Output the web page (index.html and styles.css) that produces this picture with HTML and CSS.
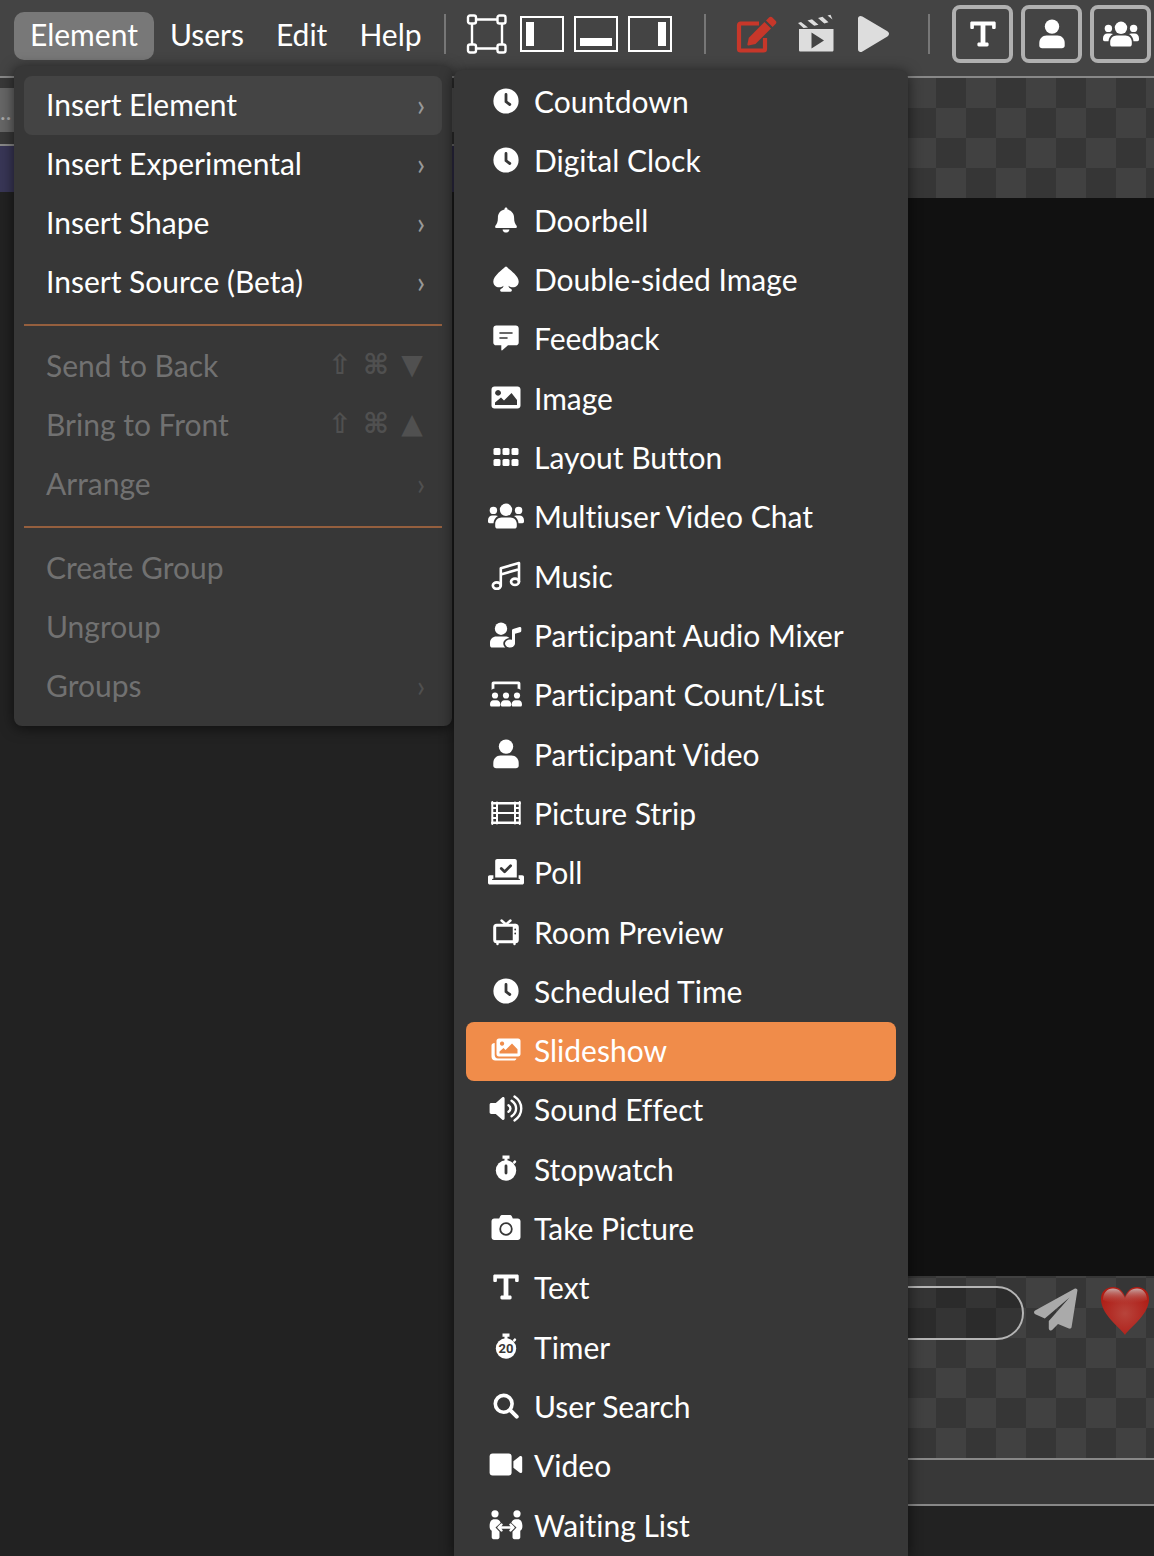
FILE: index.html
```html
<!DOCTYPE html>
<html lang="en">
<head>
    <meta charset="UTF-8">
    <meta name="viewport" content="width=device-width, initial-scale=1.0">
    <title>Room Editor</title>
    <link rel="stylesheet" href="styles.css">
</head>
<body>
    <!-- shared icons -->
    <svg class="sprite" aria-hidden="true">
        <symbol id="clock" viewBox="0 0 36 30">
            <circle cx="18" cy="15" r="12.6"/>
            <path class="cut" d="M18 8.5v7.2l3.8 2.8" stroke-width="2.8"/>
        </symbol>
        <symbol id="user" viewBox="0 0 36 30">
            <circle cx="18" cy="7.6" r="7.2"/>
            <path d="M12.5 16.6h11c4.2 0 7.2 3.4 7.2 7.4v2.4c0 1.7-1.2 2.8-2.8 2.8H8.1c-1.6 0-2.8-1.1-2.8-2.8V24c0-4 3-7.4 7.2-7.4z"/>
        </symbol>
        <symbol id="users" viewBox="0 0 36 30">
            <circle cx="18" cy="8.8" r="6.2"/>
            <circle cx="5.4" cy="9.4" r="3.7"/>
            <circle cx="30.6" cy="9.4" r="3.7"/>
            <path d="M13.6 16.4h8.8c3.6 0 6.4 2.8 6.4 6.4v2.4c0 1.4-1 2.3-2.3 2.3h-17c-1.3 0-2.3-.9-2.3-2.3v-2.4c0-3.6 2.8-6.4 6.4-6.4z"/>
            <path d="M0 19.2c0-2.6 2-4.6 4.4-4.6h3.2c.9 0 1.7.2 2.4.5-2.6 1.5-4.3 4-4.5 7.1H1.6c-.9 0-1.6-.7-1.6-1.6z"/>
            <path d="M36 19.2c0-2.6-2-4.6-4.4-4.6h-3.2c-.9 0-1.7.2-2.4.5 2.6 1.5 4.3 4 4.5 7.1h3.9c.9 0 1.6-.7 1.6-1.6z"/>
        </symbol>
        <symbol id="text" viewBox="0 0 36 30">
            <path d="M6.6 2.4h22.8c.7 0 1.3.6 1.3 1.3v5c0 .7-.6 1.3-1.3 1.3h-1c-.7 0-1.3-.6-1.3-1.3V6.5h-6.7v17h1.8c.8 0 1.4.6 1.4 1.4v1.2c0 .8-.6 1.4-1.4 1.4h-8.4c-.8 0-1.4-.6-1.4-1.4v-1.2c0-.8.6-1.4 1.4-1.4h1.8v-17H8.9v2.2c0 .7-.6 1.3-1.3 1.3h-1c-.7 0-1.3-.6-1.3-1.3v-5c0-.7.6-1.3 1.3-1.3z"/>
        </symbol>
        <symbol id="watch" viewBox="0 0 36 30">
            <path d="M14.5 1.5h7v3.3h-2v3h-3v-3h-2z"/>
            <path d="M24.6 8.2l1.5-1.5c.6-.6 1.4-.3 1.8.2.5.5.5 1.1 0 1.6l-1.5 1.5z"/>
            <circle cx="18" cy="16.5" r="10.2"/>
        </symbol>
    </svg>

    <header class="toolbar">
        <nav class="menubar">
            <button class="menu-btn active" aria-expanded="true">Element</button>
            <button class="menu-btn">Users</button>
            <button class="menu-btn">Edit</button>
            <button class="menu-btn">Help</button>
        </nav>
        <div class="tools panels">
            <button class="tool" aria-label="Transform">
                <svg width="44" height="40" viewBox="0 0 44 40" fill="none" stroke="#fff" stroke-width="2.4">
                    <path d="M10 5.5h22M10 34.500h22M6 9v22M36 9v22"/>
                    <rect x="2" y="1.500" width="8" height="8" rx="2"/><rect x="31.500" y="1.500" width="8" height="8" rx="2"/>
                    <rect x="2" y="30.500" width="8" height="8" rx="2"/><rect x="31.500" y="30.500" width="8" height="8" rx="2"/>
                </svg>
            </button>
            <button class="tool" aria-label="Left panel">
                <svg width="44" height="36" viewBox="0 0 44 36"><rect class="frame" x="1" y="1" width="42" height="34"/><path fill="#fff" d="M6 6h8v24H6z"/></svg>
            </button>
            <button class="tool" aria-label="Bottom panel">
                <svg width="44" height="36" viewBox="0 0 44 36"><rect class="frame" x="1" y="1" width="42" height="34"/><path fill="#fff" d="M6 22h32v8H6z"/></svg>
            </button>
            <button class="tool" aria-label="Right panel">
                <svg width="44" height="36" viewBox="0 0 44 36"><rect class="frame" x="1" y="1" width="42" height="34"/><path fill="#fff" d="M30 6h8v24h-8z"/></svg>
            </button>
        </div>
        <div class="tools modes">
            <button class="tool" aria-label="Edit mode">
                <svg width="42" height="40" viewBox="1 0 42 40" fill="#c7372a">
                    <path d="M24 9.500H5.500a1.500 1.500 0 0 0-1.500 1.500v24a1.500 1.500 0 0 0 1.500 1.500h23a1.500 1.500 0 0 0 1.500-1.500V24" fill="none" stroke="#c7372a" stroke-width="4.200"/>
                    <path d="M29.500 8l6.500 6.500L20.500 30l-7 1.400c-.7.1-1.200-.4-1.100-1.100l1.400-6.500z"/>
                    <path d="M31 6.500l3-3c1-1 2.400-1 3.400 0l3.200 3.200c1 1 1 2.400 0 3.400l-3 2.900z"/>
                </svg>
            </button>
            <button class="tool" aria-label="Scenes">
                <svg width="40" height="40" viewBox="0 0 40 40" fill="#ddd">
                    <path fill-rule="evenodd" d="M1 15h34.500v21c0 1-.6 1.600-1.500 1.600H2.500C1.600 37.600 1 37 1 36zM13.500 18.500v16L26 26.500z"/>
                    <path d="M0 9l3-1 7 5.500-4.500.5zM9.500 6.500l4.500-1.300 6.500 5.600-4.300 1zM20 4l4.500-1.300 6 5.500-4.200 1.200zM29.500 1.500l3-.8 2 4.800z"/>
                </svg>
            </button>
            <button class="tool" aria-label="Play">
                <svg width="32" height="38" viewBox="0 0 32 38" fill="#ddd"><path d="M0 3.500C0 1 2.400.3 4.400 1.500l25 14.800c2.200 1.300 2.200 3.900 0 5.200l-25 15C2.400 37.700 0 36.800 0 34.300z"/></svg>
            </button>
        </div>
        <div class="tools inserts">
            <button class="insert-btn" aria-label="Add text"><svg class="icon"><use href="#text"/></svg></button>
            <button class="insert-btn" aria-label="Add participant"><svg class="icon"><use href="#user"/></svg></button>
            <button class="insert-btn" aria-label="Add group"><svg class="icon"><use href="#users"/></svg></button>
        </div>
    </header>

    <main class="workspace">
        <aside class="sidebar">
            <div class="sidebar-top"><button class="picker">..</button></div>
            <div class="selected-row"></div>
        </aside>
        <section class="stage">
            <div class="screen"></div>
            <form class="chat">
                <input class="chat-input" type="text" aria-label="Message">
                <button class="tool" type="button" aria-label="Send">
                    <svg width="44" height="46" viewBox="0 -2 44 46" fill="#aaa">
                        <path d="M40.500.7c1.500-.9 3.200.2 2.900 1.900l-5.800 36.500c-.2 1.300-1.500 2-2.700 1.500L24 36l-5.600 5.800c-1.300 1.300-3.600.5-3.600-1.400V33L35.500 9.500 10.800 30.400l-9.500-4.100c-1.600-.7-1.700-2.900-.2-3.800z"/>
                    </svg>
                </button>
                <button class="tool" type="button" aria-label="Heart">
                    <svg width="50" height="50" viewBox="0 0 50 50">
                        <defs>
                            <radialGradient id="heart" cx="50%" cy="55%" r="60%"><stop offset="0" stop-color="#b8443b"/><stop offset=".55" stop-color="#b22c25"/><stop offset="1" stop-color="#b01b12"/></radialGradient>
                            <linearGradient id="shine" x1="0" y1="0" x2="0" y2="1"><stop offset="0" stop-color="#ccc" stop-opacity=".8"/><stop offset="1" stop-color="#b8443b" stop-opacity="0"/></linearGradient>
                        </defs>
                        <path fill="url(#heart)" d="M25 49C22 43 2 30 1 14 .5 6 6 1 13 1c6 0 10 4 12 10C27 5 31 1 37 1c7 0 12.500 5 12 13-1 16-21 29-24 35z"/>
                        <path fill="url(#shine)" d="M3 14C3 7 7 2.500 13 2.500c6 0 9.500 4 12 10 2.500-6 6-10 12-10 6 0 10 4.500 10 11.500-12 5-32 5-44 0z"/>
                    </svg>
                </button>
            </form>
            <div class="status-bar"></div>
            <div class="drawer"></div>
        </section>
    </main>

    <ul class="dropdown">
        <li><button class="item open">Insert Element <span class="arrow">›</span></button></li>
        <li><button class="item">Insert Experimental <span class="arrow">›</span></button></li>
        <li><button class="item">Insert Shape <span class="arrow">›</span></button></li>
        <li><button class="item">Insert Source (Beta) <span class="arrow">›</span></button></li>
        <li class="divider"></li>
        <li><button class="item" disabled>Send to Back <span class="keys"><kbd>⇧</kbd><kbd>⌘</kbd><kbd>▼</kbd></span></button></li>
        <li><button class="item" disabled>Bring to Front <span class="keys"><kbd>⇧</kbd><kbd>⌘</kbd><kbd>▲</kbd></span></button></li>
        <li><button class="item" disabled>Arrange <span class="arrow">›</span></button></li>
        <li class="divider"></li>
        <li><button class="item" disabled>Create Group</button></li>
        <li><button class="item" disabled>Ungroup</button></li>
        <li><button class="item" disabled>Groups <span class="arrow">›</span></button></li>
    </ul>

    <ul class="submenu">
        <li><button class="element"><svg class="icon"><use href="#clock"/></svg>Countdown</button></li>
        <li><button class="element"><svg class="icon"><use href="#clock"/></svg>Digital Clock</button></li>
        <li><button class="element"><svg class="icon" viewBox="0 0 36 30">
            <path d="M18 2.500c.8 0 1.500.6 1.500 1.500v.6c4 .8 6.600 4 6.600 8.200 0 4 .9 5.900 2.500 8 .6.900.1 2.100-1 2.100H8.400c-1.100 0-1.600-1.200-1-2.100 1.600-2.100 2.500-4 2.500-8 0-4.200 2.600-7.400 6.600-8.200V4c0-.9.700-1.500 1.500-1.500zM14.600 24.400h6.800c-.2 4.200-6.600 4.200-6.800 0z"/>
        </svg>Doorbell</button></li>
        <li><button class="element"><svg class="icon" viewBox="0 0 36 30">
            <path d="M17 3c.6-.7 1.400-.7 2 0 1.800 2.200 11.700 8.600 11.700 14.500 0 5.600-6.200 7.400-10.200 4.300.2 1.700.9 2.400 2.600 3.200 1.200.6 1 2.700-.6 2.700h-9c-1.600 0-1.800-2.100-.6-2.700 1.700-.8 2.400-1.500 2.600-3.200-4 3.100-10.200 1.300-10.200-4.300C5.300 11.600 15.200 5.200 17 3z"/>
        </svg>Double-sided Image</button></li>
        <li><button class="element"><svg class="icon" viewBox="0 0 36 30">
            <path d="M8.200 2.500h19.600c1.700 0 2.900 1.200 2.900 2.900v14c0 1.700-1.200 2.900-2.900 2.900H20l-5.700 4.900c-.5.400-1 .1-1-.5v-4.400H8.200c-1.700 0-2.900-1.200-2.900-2.900v-14c0-1.700 1.200-2.900 2.900-2.900z"/>
            <path class="cut" d="M12 10h12M12 15h7" stroke-width="1.600"/>
        </svg>Feedback</button></li>
        <li><button class="element"><svg class="icon" viewBox="0 0 36 30">
            <path fill-rule="evenodd" d="M6.500 3.500h23c1.700 0 3 1.300 3 3v16c0 1.700-1.300 3-3 3h-23c-1.700 0-3-1.300-3-3v-16c0-1.700 1.300-3 3-3zM7 22h22v-5l-5.500-7-7.500 7.500-3-3-6 5zM10 7a2.900 2.900 0 1 0 .1 0z"/>
        </svg>Image</button></li>
        <li><button class="element"><svg class="icon" viewBox="0 0 36 30">
            <rect x="5.500" y="6" width="7" height="7" rx="1.500"/><rect x="14.500" y="6" width="7" height="7" rx="1.500"/><rect x="23.500" y="6" width="7" height="7" rx="1.500"/>
            <rect x="5.500" y="17" width="7" height="7" rx="1.500"/><rect x="14.500" y="17" width="7" height="7" rx="1.500"/><rect x="23.500" y="17" width="7" height="7" rx="1.500"/>
        </svg>Layout Button</button></li>
        <li><button class="element"><svg class="icon"><use href="#users"/></svg>Multiuser Video Chat</button></li>
        <li><button class="element"><svg class="icon line" viewBox="0 0 36 30" stroke-width="2.600">
            <ellipse cx="8.800" cy="24.600" rx="4" ry="3.200"/><ellipse cx="27" cy="20.800" rx="4" ry="3.200"/>
            <path d="M12.800 24.600V7.200L31 2v18.800M12.800 13.500L31 8.300"/>
        </svg>Music</button></li>
        <li><button class="element"><svg class="icon" viewBox="0 0 36 30">
            <circle cx="13" cy="8.700" r="6.200"/>
            <path d="M8.400 16.500h8.800c1.600 0 3 .5 4.100 1.400-3.600.7-6 2.800-6 5.500 0 1.700.8 3.200 2.100 4.100H4.200C3 27.500 2 26.600 2 25.200v-2.400c0-3.600 2.800-6.300 6.400-6.300z"/>
            <ellipse cx="22" cy="23.500" rx="5" ry="4"/>
            <path d="M24 10.500c0-.8.400-1.200 1.100-1.500l6.400-2c1-.3 1.800.3 1.800 1.300v2.500c0 .7-.4 1.200-1 1.400L27 13.800v9.700h-3z"/>
        </svg>Participant Audio Mixer</button></li>
        <li><button class="element"><svg class="icon" viewBox="0 0 36 30">
            <path d="M3.600 11V4.500c0-1.200.8-2 2-2h24.800c1.200 0 2 .8 2 2V11c-.6-.9-1.500-1.300-2.800-1.300V5.300H6.400v4.400c-1.300 0-2.200.4-2.800 1.300z"/>
            <circle cx="7" cy="16.500" r="3.100"/><circle cx="18" cy="16.500" r="3.100"/><circle cx="29" cy="16.500" r="3.100"/>
            <path d="M5.500 21.200h3c2.300 0 3.900 1.900 3.900 4.200 0 1.200-.5 2.100-1.500 2.100H3.500c-1 0-1.500-.9-1.500-2.100 0-2.300 1.200-4.200 3.500-4.200zM16.500 21.200h3c2.300 0 3.700 1.900 3.700 4.200 0 1.200-.5 2.100-1.500 2.100h-7.400c-1 0-1.500-.9-1.500-2.100 0-2.300 1.400-4.200 3.700-4.200zM27.500 21.200h3c2.300 0 3.500 1.900 3.500 4.200 0 1.200-.5 2.100-1.500 2.100h-7.400c-1 0-1.500-.9-1.500-2.100 0-2.300 1.600-4.200 3.900-4.200z"/>
        </svg>Participant Count/List</button></li>
        <li><button class="element"><svg class="icon"><use href="#user"/></svg>Participant Video</button></li>
        <li><button class="element"><svg class="icon line" viewBox="0 0 36 30" stroke-width="2">
            <path d="M4.300 4v22M31.700 4v22M9 4.500v21M27 4.500v21M9 15h18M4.300 10h4.500M4.300 15h4.500M4.300 20h4.500M27 10h4.500M27 15h4.500M27 20h4.500"/>
            <path d="M4.300 5.200h27.400M4.300 24.800h27.400" stroke-width="2.400"/>
        </svg>Picture Strip</button></li>
        <li><button class="element"><svg class="icon" viewBox="0 0 36 30">
            <path d="M9.200 2h17.600c1.200 0 2 .8 2 2v16.500H7.200V4c0-1.200.8-2 2-2z"/>
            <path d="M1.800 18.300h3.600v3.400c-.8 0-1.400.2-1.400.7s.5.7 1.200.7h25.600c.7 0 1.200-.2 1.200-.7s-.6-.7-1.400-.7v-3.400h3.600c1.200 0 1.800.8 1.800 1.800v5.600c0 1-.8 1.800-1.800 1.800H1.800c-1 0-1.800-.8-1.800-1.800v-5.600c0-1 .6-1.800 1.800-1.800z"/>
            <path class="cut" d="M13.300 11.500l3.300 3.200 6-6" stroke-width="2.800"/>
        </svg>Poll</button></li>
        <li><button class="element"><svg class="icon line" viewBox="0 0 36 30" stroke-width="3">
            <rect x="6.700" y="8.200" width="22.600" height="16.600" rx="2"/>
            <path d="M13.500 3.500L18 7.500l4.500-4M9.500 26v1M26.500 26v1" stroke-width="2.400"/>
            <path d="M27 9v15" stroke-width="4.500"/><path class="cut" d="M27.200 12.500v.1M27.200 16.500v.1" stroke-width="1.800"/>
        </svg>Room Preview</button></li>
        <li><button class="element"><svg class="icon"><use href="#clock"/></svg>Scheduled Time</button></li>
        <li><button class="element selected"><svg class="icon" viewBox="0 0 36 30">
            <path fill-rule="evenodd" d="M11 3.500h19c1.600 0 2.500 1 2.500 2.500v13c0 1.500-.9 2.500-2.500 2.500H11c-1.600 0-2.500-1-2.500-2.500V6c0-1.500.9-2.500 2.500-2.500zM11.500 18.500h18v-4.300L24 8.500 17.500 15l-2-2-4 3.500zM14 6.500a2.100 2.100 0 1 0 .1 0z"/>
            <path d="M6.700 8v12c0 2 1.200 3.400 3.300 3.400h18.400c-.3 1.300-1.300 2.100-2.600 2.100H7.300c-2.300 0-3.800-1.500-3.800-3.800V10.500C3.500 9 4.800 8 6.700 8z"/>
        </svg>Slideshow</button></li>
        <li><button class="element"><svg class="icon" viewBox="0 0 36 30">
            <path d="M3.300 9h4.500l6.500-5.700c1-.8 2.300-.2 2.300 1.100v20.200c0 1.300-1.300 1.900-2.300 1.100L7.800 20H3.300c-1 0-1.700-.7-1.700-1.700v-7.600c0-1 .7-1.700 1.700-1.700z"/>
            <path class="stroke" d="M20.500 11.300c2.600 1.800 2.600 4.600 0 6.400M23.600 6.700c6 4 6 11.600 0 15.600M26.500 2.600c9 6 9 17.800 0 23.800" stroke-width="2.400"/>
        </svg>Sound Effect</button></li>
        <li><button class="element"><svg class="icon" viewBox="0 0 36 30">
            <use href="#watch"/><path class="cut" d="M18 12v7" stroke-width="2.800"/>
        </svg>Stopwatch</button></li>
        <li><button class="element"><svg class="icon" viewBox="0 0 36 30">
            <path d="M6.300 5.500h4.900l.9-2c.4-1 1.100-1.500 2.200-1.500h7.400c1.100 0 1.800.5 2.200 1.500l.9 2h4.900c1.600 0 2.800 1.200 2.800 2.800v15.900c0 1.600-1.200 2.800-2.800 2.800H6.300c-1.600 0-2.800-1.200-2.800-2.800V8.300c0-1.600 1.200-2.800 2.800-2.800z"/>
            <circle class="cut" cx="18" cy="16" r="5.800" stroke-width="1.800"/>
        </svg>Take Picture</button></li>
        <li><button class="element"><svg class="icon"><use href="#text"/></svg>Text</button></li>
        <li><button class="element"><svg class="icon" viewBox="0 0 36 30">
            <use href="#watch"/><text class="watch-label" x="18" y="21" text-anchor="middle">20</text>
        </svg>Timer</button></li>
        <li><button class="element"><svg class="icon line" viewBox="0 0 36 30">
            <circle cx="15.700" cy="12.800" r="8.400" stroke-width="3.600"/><path d="M22.200 19.200l6.500 6.500" stroke-width="4"/>
        </svg>User Search</button></li>
        <li><button class="element"><svg class="icon" viewBox="0 0 36 30">
            <rect x="1.600" y="3.500" width="22" height="22" rx="3"/>
            <path d="M25.400 11.200l6-4.800c1.100-.9 2.800-.3 2.800 1.200v13.800c0 1.500-1.700 2.100-2.800 1.200l-6-4.800z"/>
        </svg>Video</button></li>
        <li><button class="element"><svg class="icon" viewBox="0 0 36 30">
            <circle cx="7" cy="3.800" r="3.600"/><circle cx="29" cy="3.800" r="3.600"/>
            <path d="M6.500 9.200h1.800c2.200 0 3.500 1.400 4.400 3.600L7.500 17.500l4 4.200v5.600c0 1.100-.8 1.900-1.800 1.900H5.500c-1 0-1.800-.8-1.800-1.900v-6.500c-1.500-.8-2.100-2.300-2.100-4.500 0-4.500 1.500-7.100 4.900-7.100z"/>
            <path d="M29.500 9.200h-1.800c-2.200 0-3.500 1.400-4.400 3.600l5.200 4.700-4 4.200v5.600c0 1.100.8 1.900 1.800 1.900h4.200c1 0 1.800-.8 1.800-1.900v-6.500c1.500-.8 2.100-2.300 2.100-4.500 0-4.500-1.500-7.100-4.900-7.100z"/>
            <path class="stroke" d="M11 17.500h14M13.500 14.500l-3 3 3 3M22.500 14.500l3 3-3 3" stroke-width="2.400"/>
        </svg>Waiting List</button></li>
    </ul>
</body>
</html>
```

FILE: styles.css
```css
* {
    box-sizing: border-box;
}
body {
    margin: 0;
    position: relative;
    display: flex;
    flex-direction: column;
    min-height: 100vh;
    overflow-x: hidden;
    background: #222;
    color: #fff;
    font-family: Lato, "Open Sans", sans-serif;
    font-size: 30px;
    font-variant-ligatures: no-common-ligatures;
}
button {
    font: inherit;
    font-variant-ligatures: inherit;
    color: inherit;
    background: none;
    border: none;
    padding: 0;
    cursor: pointer;
}
ul {
    list-style: none;
    margin: 0;
}
.sprite {
    position: absolute;
    width: 0;
    height: 0;
}

/* toolbar */
.toolbar {
    display: flex;
    align-items: flex-start;
    height: 78px;
    padding-left: 14px;
    background: #444;
    border-bottom: 2px solid #888;
}
.menubar {
    display: flex;
    flex: none;
    width: 430px;
    margin-top: 12px;
}
.menu-btn {
    height: 48px;
    padding: 0 16px 5px;
    border-radius: 10px;
}
.menu-btn.active {
    background: #787878;
}
.tools {
    display: flex;
    align-items: center;
    flex: none;
    height: 40px;
    margin-top: 14px;
    border-left: 2px solid #777;
}
.tool {
    display: flex;
}
.panels {
    gap: 10px;
    width: 260px;
    padding-left: 20px;
}
.modes {
    gap: 20px;
    width: 224px;
    padding-left: 30px;
}
.inserts {
    gap: 8px;
    padding-left: 22px;
}
.frame {
    fill: none;
    stroke: #fff;
    stroke-width: 2;
}
.insert-btn {
    display: flex;
    align-items: center;
    justify-content: center;
    width: 61px;
    height: 58px;
    border: 4px solid #b0b0b0;
    border-radius: 8px;
}

/* workspace */
.workspace {
    display: flex;
    flex: 1;
}
.sidebar {
    flex: none;
    width: 456px;
}
.sidebar-top {
    padding: 10px 0 12px;
    background: #383838;
    border-bottom: 2px solid #888;
}
.picker {
    display: block;
    width: 100%;
    height: 44px;
    background: #666;
    color: #aaa;
    font-size: 24px;
    text-align: left;
}
.selected-row {
    height: 46px;
    background: #383656;
}
.stage {
    display: flex;
    flex: 1;
    flex-direction: column;
    padding-top: 120px;
    background: conic-gradient(#414141 25%, #363636 0 50%, #414141 0 75%, #363636 0) 0 0 / 60px 60px;
}
.screen {
    flex: 1;
    background: #111;
}
.chat {
    display: flex;
    align-items: flex-start;
    height: 182px;
    padding: 10px 4px 0 10px;
}
.chat-input {
    flex: 1;
    min-width: 0;
    height: 54px;
    margin-right: 10px;
    padding: 0 24px;
    border: 2px solid #b5b5b5;
    border-radius: 27px;
    background: rgba(0, 0, 0, 0.2);
    color: #fff;
    font: inherit;
}
.chat .tool + .tool {
    margin-left: 22px;
}
.status-bar {
    height: 48px;
    background: #383838;
    border-top: 2px solid #888;
    border-bottom: 2px solid #888;
}
.drawer {
    height: 50px;
    background: #222;
}

/* menus */
.dropdown, .submenu {
    position: absolute;
    background: #373737;
    border-radius: 8px;
    box-shadow: 0 2px 14px rgba(0, 0, 0, 0.6);
}
.dropdown {
    top: 66px;
    left: 14px;
    width: 438px;
    padding: 10px;
}
.item {
    display: flex;
    align-items: center;
    justify-content: space-between;
    width: 100%;
    height: 59px;
    padding: 0 12px 4px 22px;
    border-radius: 8px;
    white-space: nowrap;
}
.item.open {
    background: #444;
}
.item:disabled {
    color: #717171;
}
.arrow {
    width: 18px;
    color: #999;
    text-align: center;
}
.item:disabled .arrow, .keys {
    color: #505050;
}
.keys {
    display: flex;
}
.keys kbd {
    width: 36px;
    font-family: "DejaVu Sans", sans-serif;
    font-size: 28px;
    font-weight: bold;
    text-align: center;
}
.divider {
    height: 2px;
    margin: 12px 0 11px;
    background: #955f3e;
}
.submenu {
    top: 70px;
    bottom: 0;
    left: 454px;
    display: flex;
    flex-direction: column;
    width: 454px;
    padding: 3px 12px 0;
    border-radius: 8px 8px 0 0;
}
.submenu li {
    display: flex;
    flex: 1;
}
.element {
    --row-bg: #373737;
    display: flex;
    align-items: center;
    gap: 10px;
    width: 100%;
    padding: 0 22px 3px;
    border-radius: 8px;
    white-space: nowrap;
}
.element.selected {
    --row-bg: #f08c4a;
    background: #f08c4a;
}
.icon {
    flex: none;
    width: 36px;
    height: 30px;
    fill: #fff;
}
.icon.line, .stroke {
    fill: none;
    stroke: #fff;
    stroke-linecap: round;
    stroke-linejoin: round;
}
.cut {
    fill: none;
    stroke: var(--row-bg);
    stroke-linecap: round;
    stroke-linejoin: round;
}
.watch-label {
    fill: var(--row-bg);
    font: bold 13px Roboto, sans-serif;
}
```
